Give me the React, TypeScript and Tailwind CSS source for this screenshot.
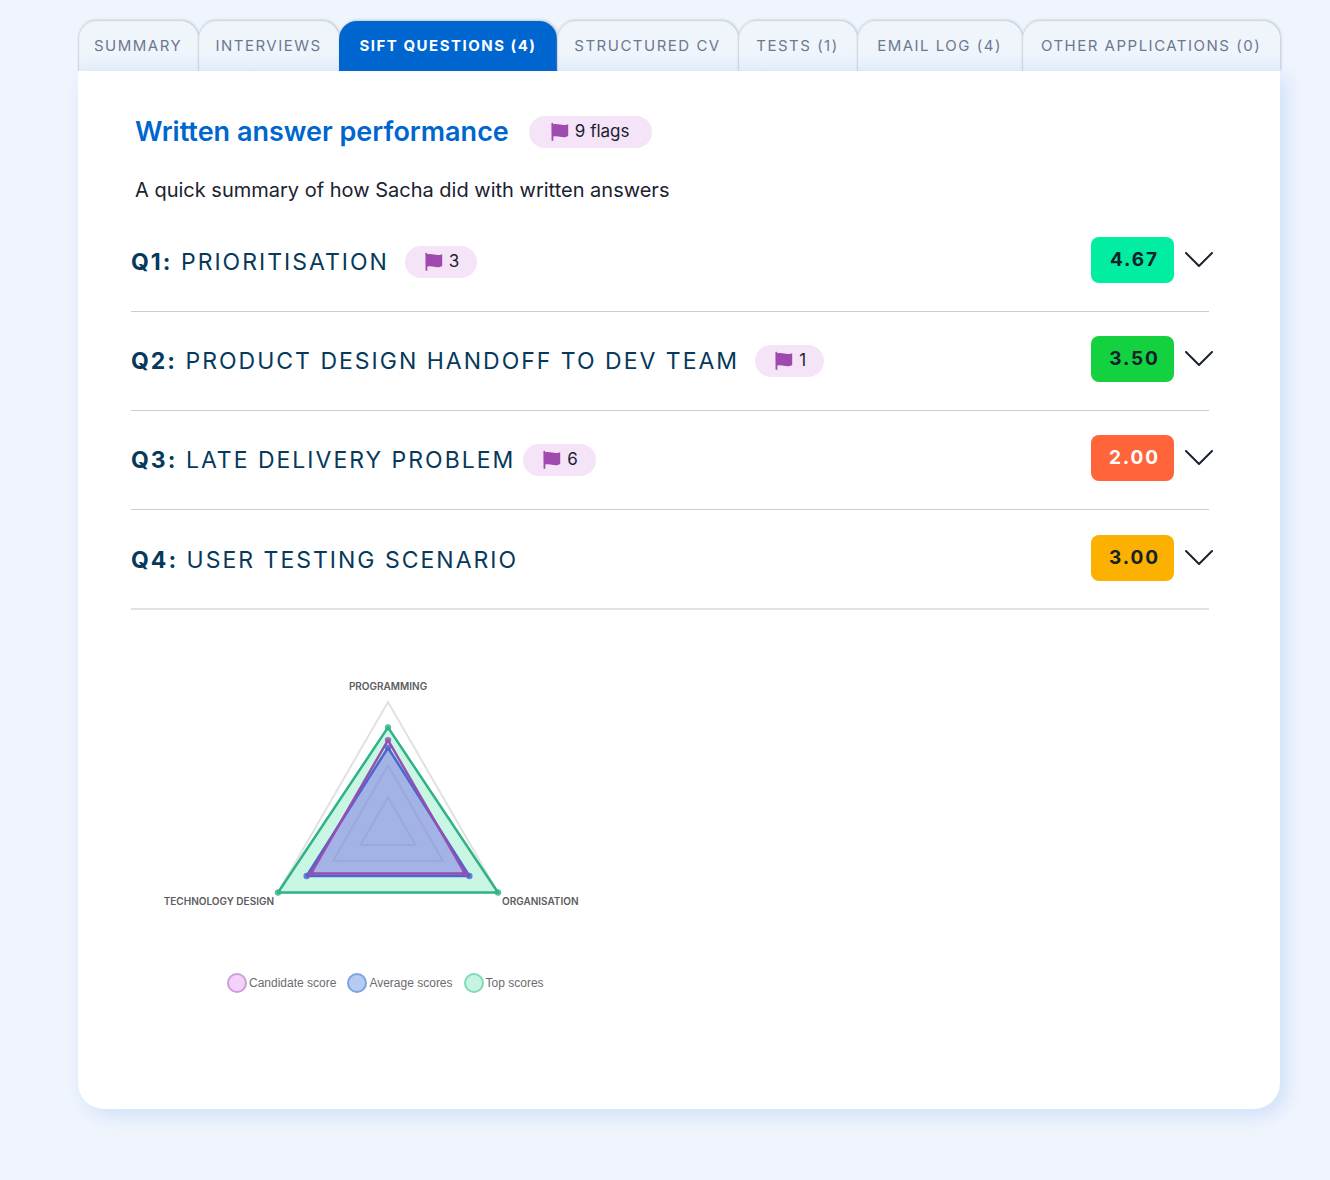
import React from "react";

const tabs = [
  "Summary",
  "Interviews",
  "Sift questions (4)",
  "Structured CV",
  "Tests (1)",
  "Email log (4)",
  "Other applications (0)",
];
const activeTab = 2;

const questions = [
  { id: "Q1", title: "Prioritisation", flags: 3, gap: "gap-4", score: "4.67", tone: "bg-[#00eda2] text-[#12212b]" },
  { id: "Q2", title: "Product design handoff to dev team", flags: 1, gap: "gap-4", score: "3.50", tone: "bg-[#13d13f] text-[#12212b]" },
  { id: "Q3", title: "Late delivery problem", flags: 6, gap: "gap-2", score: "2.00", tone: "bg-[#ff643a] text-white" },
  { id: "Q4", title: "User testing scenario", flags: 0, gap: "gap-2", score: "3.00", tone: "bg-[#fcb100] text-[#12212b]" },
];

const legend = [
  { label: "Candidate score", tone: "border-[#cf9bdc] bg-[#f3d3fb]" },
  { label: "Average scores", tone: "border-[#7ba4e2] bg-[#b5cbf0]" },
  { label: "Top scores", tone: "border-[#7fd9b5] bg-[#c5f5e0]" },
];

function FlagIcon() {
  return (
    <svg viewBox="0 0 18 20" className="h-5 w-[18px] shrink-0" fill="#9f48ad" aria-hidden="true">
      <path d="M0.4 1.6 Q0.4 0.8 1.3 0.8 Q2.2 0.8 2.3 2.2 C4.6 1.6 6.6 1.9 9 2.6 C11.6 3.3 14.4 3.2 17.2 2.2 V14 C14.4 15.6 11.6 15.4 9 14.8 C6.6 14 4.6 14 2.3 14.6 V18.8 H0.6 Z" />
    </svg>
  );
}

function FlagPill({ padding, children }: { padding: string; children: React.ReactNode }) {
  return (
    <span className={"flex h-8 shrink-0 items-center gap-1.5 rounded-full bg-[#f5e3f7] text-[17px] text-[#1b2230] " + padding}>
      <FlagIcon />
      {children}
    </span>
  );
}

const centreX = 257;
const centreY = 170;
const radius = 127;

function triangle(top: number, side: number) {
  const dx = radius * 0.866 * side;
  const dy = (radius / 2) * side;
  return [
    [centreX, centreY - radius * top],
    [centreX + dx, centreY + dy],
    [centreX - dx, centreY + dy],
  ];
}

function Series({ top, side, fill, stroke }: { top: number; side: number; fill: string; stroke: string }) {
  const points = triangle(top, side);
  return (
    <g>
      <polygon points={points.join(" ")} fill={fill} stroke={stroke} strokeWidth="2.5" strokeLinejoin="round" />
      {points.map(([x, y]) => (
        <circle key={x + "-" + y} cx={x} cy={y} r="3.2" fill={stroke} fillOpacity="0.8" />
      ))}
    </g>
  );
}

function RadarChart() {
  return (
    <svg
      viewBox="0 0 460 260"
      className="block w-[460px] max-w-full"
      role="img"
      aria-label="Scores for programming, organisation and technology design"
    >
      <polygon points={triangle(1, 1).join(" ")} fill="none" stroke="#e1e1e4" strokeWidth="2" />
      <Series top={0.8} side={1} fill="#c8f6e2" stroke="#2fb287" />
      <Series top={0.64} side={0.74} fill="#a3b3e6" stroke="#4a66d0" />
      <Series top={0.7} side={0.7} fill="none" stroke="#964fb0" />
      {[0.25, 0.5].map((s) => (
        <polygon key={s} points={triangle(s, s).join(" ")} fill="none" stroke="#9aa8dc" strokeWidth="2" />
      ))}
      <g className="fill-[#5c5c62] font-['Inter'] text-[10px] font-semibold">
        <text x="257" y="31" textAnchor="middle">PROGRAMMING</text>
        <text x="143" y="246" textAnchor="end">TECHNOLOGY DESIGN</text>
        <text x="371" y="246">ORGANISATION</text>
      </g>
    </svg>
  );
}

export default function App() {
  return (
    <main className="min-h-screen bg-[#f0f5fd] pt-[21px] pr-[50px] pb-[71px] pl-[78px] font-['Inter',sans-serif]">
      <div
        role="tablist"
        className="grid grid-cols-[120fr_141fr_218fr_181fr_119fr_165fr_258fr]"
      >
        {tabs.map((tab, i) => (
          <button
            key={tab}
            type="button"
            role="tab"
            aria-selected={i === activeTab}
            className={
              i === activeTab
                ? "h-[50px] rounded-t-[18px] bg-[#0066cf] text-[15px] font-bold tracking-widest whitespace-nowrap text-white uppercase shadow-[1px_-1px_3px_#b9c6d0]"
                : "h-[50px] rounded-t-[18px] bg-linear-to-b from-[#f0f5fb] from-60% to-[#e8f0fb] text-[15px] tracking-widest whitespace-nowrap text-[#6c7890] uppercase shadow-[1px_-1px_3px_#b9c6d0,inset_1px_0_1px_#ccd6df]"
            }
          >
            {tab}
          </button>
        ))}
      </div>

      <section className="relative min-h-[1038px] rounded-b-[26px] bg-white pt-[45px] pr-[71px] pl-[53px] shadow-[6px_6px_20px_rgba(0,100,220,0.15)]">
        <header className="pl-1">
          <div className="flex items-center gap-5">
            <h1 className="text-[27px] leading-8 font-semibold text-[#0066cf]">Written answer performance</h1>
            <FlagPill padding="px-[22px]">9 flags</FlagPill>
          </div>
          <p className="mt-7 text-xl leading-7 text-[#1b2230]">
            A quick summary of how Sacha did with written answers
          </p>
        </header>

        <ul className="mt-[9px]">
          {questions.map((q) => (
            <li
              key={q.id}
              className="flex items-center justify-between border-b border-[#c6ced8] pt-6 pb-7 last:border-b-2 last:border-[#e0e2ea] last:pt-[25px] last:pb-[27px]"
            >
              <div className={"flex items-center pt-1 " + q.gap}>
                <h2 className="text-[23px] leading-8 tracking-[2px] text-[#06395b] uppercase">
                  <b className="font-bold">{q.id}:</b> {q.title}
                </h2>
                {q.flags > 0 && <FlagPill padding="pr-[18px] pl-5">{q.flags}</FlagPill>}
              </div>
              <button
                type="button"
                aria-expanded="false"
                aria-label={"Show " + q.title + ", score " + q.score}
                className="-mr-1 flex items-center gap-[11px]"
              >
                <span className={"flex h-[46px] w-[83px] items-center justify-center rounded-lg pl-1 text-[19px] font-bold tracking-widest " + q.tone}>
                  {q.score}
                </span>
                <svg viewBox="0 0 28 16" className="h-4 w-7" fill="none" stroke="#1b2230" strokeWidth="2" strokeLinecap="round" strokeLinejoin="round" aria-hidden="true">
                  <path d="M1 1 L14 14 L27 1" />
                </svg>
              </button>
            </li>
          ))}
        </ul>

        <figure className="mt-[49px]">
          <RadarChart />
          <figcaption className="mt-[54px] flex gap-[11px] pl-24 font-['Liberation_Sans'] text-xs leading-5 text-[#6b6b6f]">
            {legend.map((item) => (
              <span key={item.label} className="flex items-center gap-0.5">
                <span className={"size-5 rounded-full border-2 " + item.tone} />
                {item.label}
              </span>
            ))}
          </figcaption>
        </figure>
      </section>
    </main>
  );
}
